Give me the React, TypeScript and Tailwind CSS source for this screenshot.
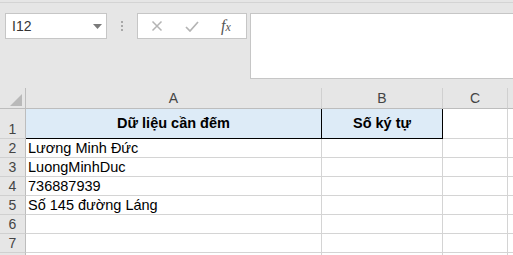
const rows = [
  { n: '2', a: 'Lương Minh Đức' },
  { n: '3', a: 'LuongMinhDuc' },
  { n: '4', a: '736887939' },
  { n: '5', a: 'Số 145 đường Láng' },
  { n: '6', a: '' },
  { n: '7', a: '' },
  { n: '', a: '' },
]

export default function App() {
  return (
    <div className="w-[513px] h-[255px] overflow-hidden bg-[#e6e6e6] font-['Liberation_Sans',Arial,sans-serif] text-[#000]">
      {/* formula bar */}
      <div className="h-[88px] flex flex-col">
        <div className="h-[2px]" />
        <div className="h-px bg-[#d4d4d4]" />
        <div className="flex items-start pl-[5px] pt-[10px]">
          <div className="w-[102px] h-[26px] bg-white border border-[#c6c6c6] flex items-center justify-between pl-[6px] pr-[4px]">
            <span className="text-[14px] text-[#333]">I12</span>
            <svg width="9" height="5" viewBox="0 0 9 5">
              <path d="M0 0h9L4.5 5z" fill="#7a7a7a" />
            </svg>
          </div>
          <div className="w-[30px] h-[26px] flex flex-col items-center justify-center gap-[2px]">
            <div className="w-[2px] h-[2px] bg-[#a8a8a8]" />
            <div className="w-[2px] h-[2px] bg-[#a8a8a8]" />
            <div className="w-[2px] h-[2px] bg-[#a8a8a8]" />
          </div>
          <div className="w-[110px] h-[26px] bg-white border border-[#c6c6c6] flex items-center">
            <svg width="12" height="12" viewBox="0 0 12 12" className="ml-[13px]">
              <path d="M1.5 1.5l9 9M10.5 1.5l-9 9" stroke="#b4b4b4" strokeWidth="1.5" fill="none" />
            </svg>
            <svg width="14" height="11" viewBox="0 0 14 11" className="ml-[22px]">
              <path d="M1 6l4 4 8-9" stroke="#b4b4b4" strokeWidth="1.7" fill="none" />
            </svg>
            <span className="ml-[22px] text-[16px] italic text-[#555] font-['Liberation_Serif',serif] leading-none">
              f<span className="text-[12px]">x</span>
            </span>
          </div>
          <div className="ml-[3px] flex-1 h-[66px] bg-white border border-[#c6c6c6] border-r-0" />
        </div>
      </div>

      {/* sheet grid */}
      <div className="grid grid-cols-[26px_296px_121px_65px_1fr] grid-rows-[21px_30px_repeat(7,19px)]">
        <div className="border-r border-b border-[#bdbdbd] flex items-end justify-end pr-[3px] pb-[2px]">
          <svg width="12" height="12" viewBox="0 0 12 12">
            <path d="M12 0V12H0z" fill="#b9b9b9" />
          </svg>
        </div>
        <div className="border-r border-b border-r-[#d0d0d0] border-b-[#bdbdbd] flex items-center justify-center text-[14px] text-[#444]">A</div>
        <div className="border-r border-b border-r-[#d0d0d0] border-b-[#bdbdbd] flex items-center justify-center text-[14px] text-[#444]">B</div>
        <div className="border-r border-b border-r-[#d0d0d0] border-b-[#bdbdbd] flex items-center justify-center text-[14px] text-[#444]">C</div>
        <div className="border-b border-[#bdbdbd]" />

        <div className="border-r border-b border-r-[#bdbdbd] border-b-[#d0d0d0] flex items-end justify-center text-[14px] text-[#444] leading-none pb-[2px]">1</div>
        <div className="border-r border-b border-black bg-[#ddebf7] flex items-center justify-center text-[14.5px] font-bold">Dữ liệu cần đếm</div>
        <div className="border-r border-b border-black bg-[#ddebf7] flex items-center justify-center text-[14.5px] font-bold">Số ký tự</div>
        <div className="bg-white border-r border-b border-[#d4d4d4]" />
        <div className="bg-white border-b border-[#d4d4d4]" />

        {rows.map((r, i) => (
          <>
            <div key={`n${i}`} className="border-r border-b border-r-[#bdbdbd] border-b-[#d0d0d0] flex items-end justify-center text-[14px] text-[#444] leading-none pb-[2px]">
              {r.n}
            </div>
            <div key={`a${i}`} className="bg-white border-r border-b border-[#d4d4d4] flex items-end pl-[2px] text-[14.5px] leading-none pb-[2px] whitespace-nowrap">
              {r.a}
            </div>
            <div key={`b${i}`} className="bg-white border-r border-b border-[#d4d4d4]" />
            <div key={`c${i}`} className="bg-white border-r border-b border-[#d4d4d4]" />
            <div key={`d${i}`} className="bg-white border-b border-[#d4d4d4]" />
          </>
        ))}
      </div>
    </div>
  )
}
